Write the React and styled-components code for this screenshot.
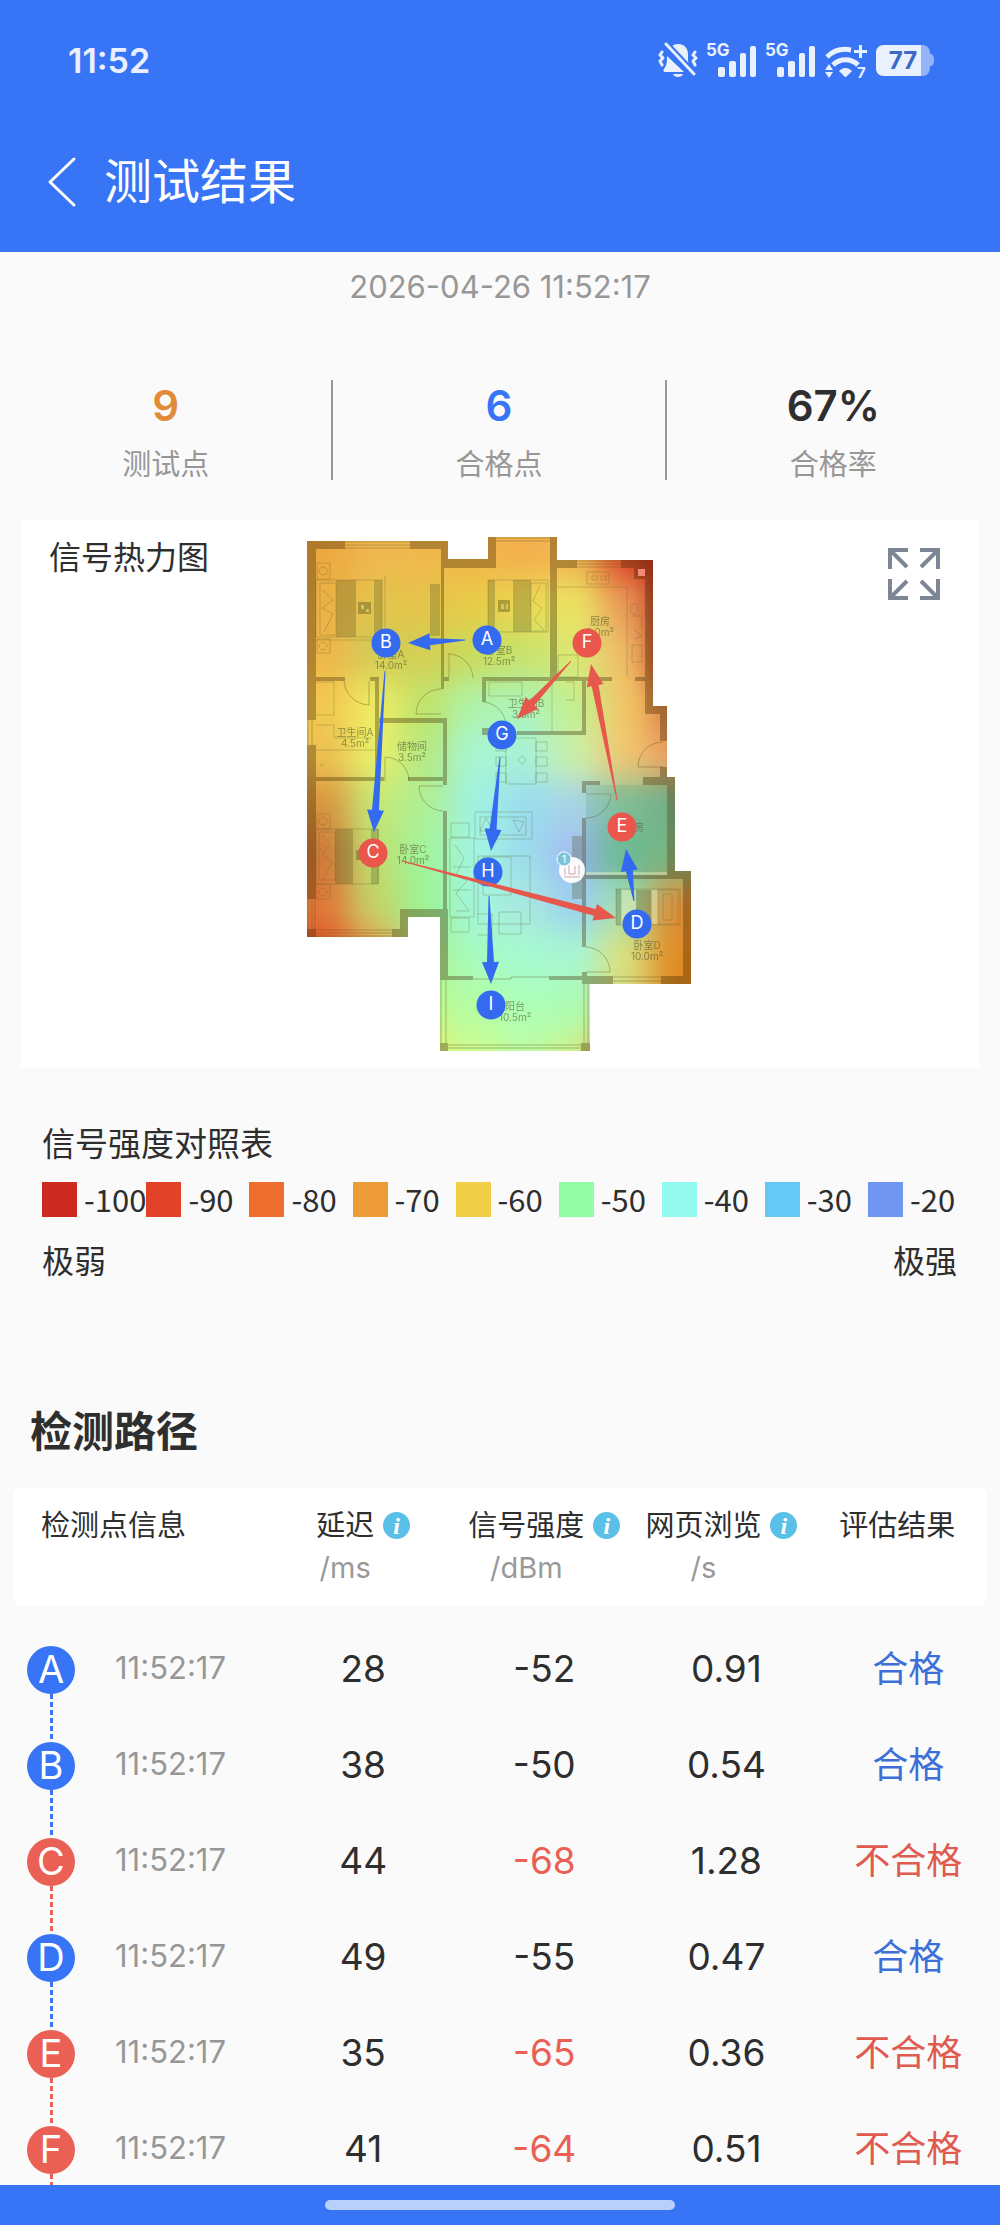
// src/App.jsx

import React from 'react';
import styled, { createGlobalStyle } from 'styled-components';

const BLUE = '#3875f6';
const RED = '#ea6055';

const GlobalStyle = createGlobalStyle`
  * {
    box-sizing: border-box;
  }

  body {
    margin: 0;
    background: #fafafa;
    color: #2e2e2e;
    font-family: Inter, 'Noto Sans CJK SC', sans-serif;
  }

  button {
    padding: 0;
    border: none;
    background: none;
    font: inherit;
    color: inherit;
    cursor: pointer;
  }
`;

const Screen = styled.div`
  display: flex;
  flex-direction: column;
  height: 100vh;
  overflow: hidden;
`;

const Header = styled.header`
  flex: none;
  background: ${BLUE};
  color: #fff;
`;

const StatusBar = styled.div`
  display: flex;
  align-items: center;
  justify-content: space-between;
  height: 120px;
  padding: 0 66px 0 68px;
`;

const Clock = styled.time`
  color: #eaf0ff;
  font-size: 34px;
  font-weight: 600;
`;

const StatusIcons = styled.div`
  display: flex;
  align-items: center;
  gap: 8px;

  svg {
    display: block;
    fill: #e9f0fe;
  }
`;

const NavBar = styled.div`
  display: flex;
  align-items: center;
  gap: 26px;
  height: 132px;
  padding: 0 46px 8px;
`;

const BackButton = styled.button`
  width: 32px;
  height: 52px;

  svg {
    display: block;
  }
`;

const PageTitle = styled.h1`
  margin: 0;
  font-size: 48px;
  font-weight: 400;
  line-height: 60px;
`;

const Content = styled.main`
  flex: 1;
  min-height: 0;
  overflow-y: auto;
  scrollbar-width: none;
`;

const TestTime = styled.p`
  margin: 0;
  padding-top: 15px;
  color: #979797;
  font-size: 31px;
  line-height: 40px;
  text-align: center;
`;

const Stats = styled.dl`
  display: grid;
  grid-template-columns: repeat(3, 1fr);
  margin: 73px 0 40px;
`;

const Stat = styled.div`
  display: flex;
  flex-direction: column-reverse;
  justify-content: flex-end;
  gap: 16px;
  height: 100px;
  text-align: center;

  &:not(:last-child) {
    border-right: 2px solid #989898;
  }
`;

const StatLabel = styled.dt`
  color: #979797;
  font-size: 29px;
  line-height: 34px;
`;

const StatValue = styled.dd`
  margin: 0;
  color: ${({ $color }) => $color};
  font-size: 42px;
  font-weight: 600;
  line-height: 52px;
`;

const HeatCard = styled.section`
  display: grid;
  grid-template-columns: 1fr 400px 1fr;
  align-items: start;
  height: 548px;
  margin: 0 21px;
  padding: 10px 0;
  background: #fff;
`;

const CardTitle = styled.h2`
  margin: 0;
  padding: 6px 0 0 28px;
  font-size: 32px;
  font-weight: 400;
  line-height: 44px;
`;

const ExpandButton = styled.button`
  justify-self: end;
  width: 52px;
  height: 52px;
  margin: 18px 39px 0 0;

  svg {
    display: block;
  }
`;

const Plan = styled.svg`
  display: block;
  width: 400px;
  height: 530px;
`;

const Legend = styled.section`
  margin: 51px 29px 0 42px;
  font-family: 'Noto Sans CJK SC', sans-serif;
`;

const LegendTitle = styled.h2`
  margin: 0;
  font-size: 33px;
  font-weight: 400;
  line-height: 46px;
`;

const Scale = styled.ul`
  display: grid;
  grid-template-columns: repeat(9, 1fr);
  margin: 11px 0 0;
  padding: 0;
  list-style: none;
`;

const ScaleItem = styled.li`
  display: flex;
  align-items: center;
  gap: 7px;
  height: 46px;
  font-size: 31px;
  line-height: 46px;
  white-space: nowrap;

  &::before {
    content: '';
    flex: none;
    width: 35px;
    height: 35px;
    background: ${({ $color }) => $color};
  }
`;

const ScaleEnds = styled.div`
  display: flex;
  justify-content: space-between;
  margin-top: 15px;
  padding-right: 14px;
  font-size: 32px;
  line-height: 44px;
`;

const SectionTitle = styled.h2`
  margin: 122px 30px 0;
  font-size: 42px;
  font-weight: 700;
  line-height: 58px;
`;

const TableWrap = styled.div`
  margin: 27px 13px 0;
`;

const Table = styled.table`
  width: 100%;
  table-layout: fixed;
  border-spacing: 0;

  tbody::before {
    content: '';
    display: block;
    height: 40px;
  }
`;

const Col = styled.col`
  width: ${({ $width }) => $width};
`;

const HeadCell = styled.th`
  height: 118px;
  padding: 17px 0 0;
  background: #fff;
  font-size: 29px;
  font-weight: 400;
  line-height: 42px;
  vertical-align: top;
  white-space: nowrap;

  &:first-child {
    padding-left: 28px;
    border-radius: 8px 0 0 8px;
    text-align: left;
  }

  &:nth-last-child(-n + 2) {
    padding-right: 10px;
  }

  &:last-child {
    border-radius: 0 8px 8px 0;
  }
`;

const HeadLabel = styled.div`
  display: flex;
  justify-content: center;
  gap: 9px;
`;

const Unit = styled.span`
  display: block;
  color: #999;
  font-size: 29px;
  text-align: center;
`;

const InfoButton = styled.button`
  width: 27px;
  height: 27px;
  margin-top: 7px;
  border-radius: 50%;
  background: #5bc0e8;
  color: #fff;
  font-family: 'Liberation Serif', serif;
  font-size: 24px;
  font-style: italic;
  font-weight: 700;
  line-height: 26px;
`;

const Cell = styled.td`
  height: 96px;
  padding: 0;
  color: ${({ $color }) => $color || '#2e2e2e'};
  font-size: 37px;
  line-height: 46px;
  text-align: center;
  vertical-align: top;
  white-space: nowrap;

  &:last-child {
    padding-left: 12px;
    font-size: 36px;
  }
`;

const Point = styled.div`
  display: flex;
  gap: 40px;
  padding-left: 14px;
`;

const Track = styled.div`
  display: flex;
  flex-direction: column;
  align-items: center;

  &::after {
    content: '';
    width: 3px;
    height: 48px;
    background: repeating-linear-gradient(${({ $color }) => $color} 0 5px, transparent 5px 8px);
  }
`;

const Badge = styled.span`
  width: 48px;
  height: 48px;
  border-radius: 50%;
  background: ${({ $color }) => $color};
  color: #fff;
  font-size: 38px;
  line-height: 46px;
`;

const PointTime = styled.time`
  color: #979797;
  font-size: 31px;
  line-height: 44px;
`;

const HomeBar = styled.footer`
  display: flex;
  flex: none;
  align-items: center;
  justify-content: center;
  height: 40px;
  background: ${BLUE};

  &::before {
    content: '';
    width: 35%;
    height: 10px;
    border-radius: 5px;
    background: #b9cffc;
  }
`;

const stats = [
  { label: '测试点', value: '9', color: '#e28a35' },
  { label: '合格点', value: '6', color: BLUE },
  { label: '合格率', value: '67%', color: '#2e2e2e' },
];

const scale = [
  ['-100', '#cc2a20'],
  ['-90', '#e24328'],
  ['-80', '#ed6e2d'],
  ['-70', '#ee9c38'],
  ['-60', '#f0cf47'],
  ['-50', '#92fca6'],
  ['-40', '#94f9ee'],
  ['-30', '#65c9f6'],
  ['-20', '#7196f2'],
];

const rows = [
  { id: 'A', time: '11:52:17', delay: 28, signal: -52, web: '0.91', pass: true },
  { id: 'B', time: '11:52:17', delay: 38, signal: -50, web: '0.54', pass: true },
  { id: 'C', time: '11:52:17', delay: 44, signal: -68, web: '1.28', pass: false },
  { id: 'D', time: '11:52:17', delay: 49, signal: -55, web: '0.47', pass: true },
  { id: 'E', time: '11:52:17', delay: 35, signal: -65, web: '0.36', pass: false },
  { id: 'F', time: '11:52:17', delay: 41, signal: -64, web: '0.51', pass: false },
];

// One colour per 50px square of the plan, blurred together into the heat layer
const heat = [
  'eca840 f0b850 f0b84c f2b64a f3b04e f0b852 dc4428 b01c14',
  'ecb044 e2c44c e4c44a e8cc48 ecd852 ece464 ea9c58 b42018',
  'efb64a d2cc58 d4cf54 c8dc5e c6e26c dce874 f0bc68 bc3018',
  'f2c850 f0ec64 bee46c aef4ac acf4b8 c4f090 f2c866 dc7840',
  'ecc050 e9f06a b4e882 a8f6d4 a8f2d8 caf0a8 f2c670 e89c60',
  'd8943e c4e878 aef094 a0f2e2 9adcee a8d4e8 8cc8a0 7cb890',
  'd07838 bee070 a0f49c a2f6e2 9cdcec a4bcf4 76c49c 88c088',
  'e07838 c4d468 9cf494 a2f6dc a8e8e0 9cd0f0 a0e0b0 dc8c38',
  'e25028 ec9c4c acf290 a6fbc0 a6fad0 a8f6d4 dce07c e08c24',
  'e65028 ec9440 bcf88c b4fea4 acffb8 acfcb4 d4dc80 e08424',
  'e65028 ec9440 e0f078 ccfc90 bcfca4 ccf48c e09838 e08424',
].map((line) => line.split(' '));

const outline =
  'M307 541H448V559H488V537H557V560H653V706H667V777H675V871H691V984H590V1051H440V917H408V937H307Z';

const walls = [
  'M307 541h38v8h-29v171h-9z',
  'M410 541h38v18h40v-22h8v31h-52v121h-3V549h-31z',
  'M307 745h9v154h-9zM307 929h9v8h-9zM392 929h8v-20h40v8h-32v20h-16z',
  'M550 537h7v23h20v8h-20v109h29v58h-69v-4h65v-50h-96v21h-4v-25h68z',
  'M586 677h26v4h-26zM635 677h10v4h-10zM482 728h8v7h-8z',
  'M621 560h32v146h14v35h-7v-27h-15V579h-11v-11h-13z',
  'M316 677h29v4h-29zM370 677h9v41h68v67h-4v-4h-35v-4h35v-54h-64v54h5v4h-68v-4h59v-96h-5zM444 677h5v4h-5z',
  'M443 811h4v98h1v67h25v4h-33v-71h3zM440 1043h8v8h-8zM581 1043h9v8h-9z',
  'M643 777h32v94h16v113h-30v-8h22v-97H586v68h-4V818h4v57h81v-90h-24zM660 767h7v10h-7zM582 781h18v4h-14v8h-4z',
  'M549 976h33v-4h5v4h26v8h-31v-4h-33z',
];

const thinLines = [
  'M345 542h65M345 545h65M345 548h65M496 538h54M496 541h54M577 561h44M577 564h44M577 567h44',
  'M308 720v25M312 720v25M308 899v30M312 899v30M315 899v30M316 930h76M316 933h76M316 936h76',
  'M441 980v63M446 980v63M448 1045h133M448 1048h133M584 984v59M588 984v59M613 977h48M613 981h48',
  'M473 979h38v-2h38M344 681a26 26 0 0 0 25 24v-24M449 653v24M449 654a25 25 0 0 1 24 24M441 689a25 25 0 0 0-25 25h25M385 781v-24a24 24 0 0 1 24 23M443 786h-24a25 25 0 0 0 24 25',
  'M484 702a25 25 0 0 1 22 28M586 818a25 25 0 0 0 25-24M586 947a25 25 0 0 1 24 25h-24M663 742a25 25 0 0 0-25 25h25',
];

// Beds, sofas, tables and kitchen fittings, as outlines
const furniture = [
  'M316 580h66v57h-66zM320 583h16v52h-16zM385 576v64h-69',
  'M317 563h13v16h-13zM317 639h13v14h-13zM317 814h13v15h-13zM317 884h13v15h-13z',
  'M323 567a4 4 0 1 0 .1 0M323 642a4 4 0 1 0 .1 0M323 817a4 4 0 1 0 .1 0M323 888a4 4 0 1 0 .1 0',
  'M322 590l11 10-11 8 11 6-9 18M322 835l9 9-9 10 10 8-9 18',
  'M316 829h62v55h-62zM319 832h16v48h-16z',
  'M488 580h60v52h-60zM531 583h15v48h-15zM540 585l-7 16 9 7-8 12 10 10',
  'M558 587h69v90M587 572h22v12h-22zM592 576h5v4h-5zM601 576h5v4h-5zM632 645h10v17h-10zM632 616h10v14',
  'M558 655h20v22h-20zM641 555h4v21M634 604a4 5 0 1 0 .1 0M634 630l8 6-8 3',
  'M316 682h18v33h-18M316 725h18v13h38M316 750h59M320 765h4M489 682h33v14h-33zM552 682v50M566 682h8v18h-8',
  'M506 738h30v46h-30zM496 742h10v9h-10zM496 757h10v9h-10zM496 773h10v9h-10zM536 742h11v9h-11zM536 757h11v9h-11zM536 773h11v9h-11z',
  'M475 812h57v27h-57zM480 817h46v18h-46zM450 838h24v79h-24zM455 845l9 13-8 17 11 6-11 12 13 18h-13M453 867h18M453 890h18M451 823h18v14h-18z',
  'M451 918h18v14h-18zM478 856h52v68h-52zM483 857h28v38h-28zM499 912h22v22h-22zM477 914h15v21h-15',
  'M616 889h64v36h-64zM658 890h20v34h-20zM663 894h9v26h-9zM586 794h24M318 850l4-2',
  'M486 818l-6 13h13zM513 820l6 12 5-10zM522 756l4 4-4 4-4-4z',
];

const roomLabels = [
  [391, 658, '卧室A', '14.0m²'],
  [499, 654, '卧室B', '12.5m²'],
  [600, 625, '厨房', '5.0m²'],
  [355, 736, '卫生间A', '4.5m²'],
  [412, 750, '储物间', '3.5m²'],
  [526, 707, '卫生间B', '3.6m²'],
  [413, 853, '卧室C', '14.0m²'],
  [647, 949, '卧室D', '10.0m²'],
  [515, 1010, '阳台', '10.5m²'],
  [634, 831, '书房', ''],
];

const markers = [
  { id: 'A', x: 487, y: 640, color: '#346af0' },
  { id: 'B', x: 386, y: 643, color: '#346af0' },
  { id: 'C', x: 373, y: 853, color: '#ea554c' },
  { id: 'D', x: 637, y: 924, color: '#346af0' },
  { id: 'E', x: 622, y: 827, color: '#ea554c' },
  { id: 'F', x: 587, y: 643, color: '#ea554c' },
  { id: 'G', x: 502, y: 735, color: '#346af0' },
  { id: 'H', x: 488, y: 872, color: '#346af0' },
  { id: 'I', x: 491, y: 1005, color: '#346af0' },
];

const arrows = [
  [465, 640, 408, 643, '#346af0'],
  [385, 671, 374, 832, '#346af0'],
  [402, 861, 616, 918, '#e6584c'],
  [634, 901, 626, 849, '#346af0'],
  [617, 800, 591, 664, '#e6584c'],
  [571, 661, 517, 719, '#e6584c'],
  [500, 757, 491, 851, '#346af0'],
  [489, 896, 491, 984, '#346af0'],
];

const Arrow = ({ points: [x1, y1, x2, y2, color] }) => {
  const length = Math.hypot(x2 - x1, y2 - y1);
  const angle = (Math.atan2(y2 - y1, x2 - x1) * 180) / Math.PI;
  const neck = length - 22;

  return (
    <path
      d={`M0 -.5L${neck} -3.5V-8.5L${length} 0L${neck} 8.5V3.5L0 .5Z`}
      fill={color}
      transform={`translate(${x1} ${y1}) rotate(${angle})`}
    />
  );
};

const FloorPlan = () => (
  <Plan viewBox="300 530 400 530" role="img" aria-label="信号热力图">
    <defs>
      <clipPath id="plan-outline">
        <path d={outline} />
      </clipPath>
      <filter id="heat-blur" x="-10%" y="-10%" width="120%" height="120%" colorInterpolationFilters="sRGB">
        <feGaussianBlur stdDeviation="16" />
      </filter>
    </defs>

    <g clipPath="url(#plan-outline)">
      <g filter="url(#heat-blur)">
        {heat.map((line, row) =>
          line.map((color, col) => (
            <rect
              key={`${row}-${col}`}
              x={col === 0 ? 240 : 300 + col * 50}
              y={row === 0 ? 470 : 530 + row * 50}
              width={col === 0 || col === 7 ? 111 : 51}
              height={row === 0 || row === 10 ? 111 : 51}
              fill={`#${color}`}
            />
          ))
        )}
      </g>
      <path d="M586 785h81v90h-81z" fill="#1c7350" opacity=".12" />
      <path
        d="M336 580h20v57h-20zM374 580h8v57h-8zM335 829h18v55h-18zM371 829h8v55h-8zM430 584h10v52h-10zM488 580h7v52h-7zM513 580h18v52h-18zM572 836h10v63h-10zM636 890h15v34h-15zM616 889h5v36h-5z"
        fill="#50511c"
        opacity=".28"
      />
      <path d="M358 602h13v12h-13zM498 600h12v12h-12zM356 850h10v10h-10z" fill="#50511c" opacity=".4" />
      <path d="M361 605h3v4h-3zM366 609h3v3h-3zM501 604h3v5h-3zM506 604h2v5h-2z" fill="#e3d868" opacity=".7" />
      <path d="M622 890h14v34h-14zM652 890h6v34h-6zM586 872h81v3h-81z" fill="#f7f5c5" opacity=".4" />
      <path d={furniture.join('')} fill="none" stroke="#62632e" strokeWidth="1" opacity=".3" />
      <path d={thinLines.join('')} fill="none" stroke="#665a24" strokeWidth="1" opacity=".4" />
      <path d={walls.join('')} fill="#3a2200" opacity=".34" />
      <path d="M638 569h7v7h-7z" fill="#f3897b" />
    </g>

    <g fill="#53592f" opacity=".6" fontSize="10" textAnchor="middle">
      {roomLabels.map(([x, y, name, area]) => (
        <text key={name} x={x} y={y}>
          {name}
          <tspan x={x} dy="11">
            {area}
          </tspan>
        </text>
      ))}
    </g>

    <circle cx="572" cy="870" r="13" fill="#fff" opacity=".95" />
    <path
      d="M565 868v7M579 865v10M564 877h16M569 865v9h6v-8"
      fill="none"
      stroke="#d9a6a6"
      strokeWidth="1"
    />
    <circle cx="564" cy="859" r="7" fill="#7cc3da" stroke="#fff" strokeWidth="1" />
    <text x="564" y="863" fill="#fff" fontSize="11" textAnchor="middle">
      1
    </text>

    {markers.map(({ id, x, y, color }) => (
      <circle key={id} cx={x} cy={y} r="14.5" fill={color} />
    ))}
    {arrows.map((points) => (
      <Arrow key={points.join()} points={points} />
    ))}
    <g fill="#fff" fontSize="18" textAnchor="middle">
      {markers.map(({ id, x, y }) => (
        <text key={id} x={x} y={y + 5}>
          {id}
        </text>
      ))}
    </g>
  </Plan>
);

const MuteIcon = () => (
  <svg width="40" height="36" viewBox="0 0 40 36">
    <path d="M13 5C15 3 17 2 20 2c6 0 10 4 10 10v6c0 3 1 5 3 8zM9 14l17 16H7c-2 0-2-2-1-3 2-3 3-6 3-10zM15 32h10c-1 4-9 4-10 0z" />
    <path d="M8 2l28 30" fill="none" stroke={BLUE} strokeWidth="7" />
    <path d="M8 2l28 30" fill="none" stroke="#e9f0fe" strokeWidth="3" strokeLinecap="round" />
    <path
      d="M4 10l-2 3 3 3-3 3 2 4M37 10l-2 3 3 3-3 3 2 4"
      fill="none"
      stroke="#e9f0fe"
      strokeWidth="3"
      strokeLinecap="round"
      strokeLinejoin="round"
    />
  </svg>
);

const SignalIcon = () => (
  <svg width="51" height="48" viewBox="1 -6 51 48">
    <text x="1" y="14" fontSize="17" fontWeight="700">
      5G
    </text>
    <rect x="13" y="25" width="7" height="10" rx="2" />
    <rect x="24" y="19" width="7" height="16" rx="2" />
    <rect x="35" y="11" width="6" height="24" rx="2" />
    <rect x="45" y="4" width="6" height="31" rx="2" />
  </svg>
);

const WifiIcon = () => (
  <svg width="44" height="48" viewBox="0 -6 44 48">
    <g fill="none" stroke="#e9f0fe" strokeWidth="5">
      <path d="M3 15C9 9 17 6 27 8" />
      <path d="M9 23c7-7 18-7 25 0" />
    </g>
    <path d="M15 29c4-4 9-4 13 0l-6 6h-1zM1 28l4-6 4 6zM1 30h8l-4 6zM35 3h3v5h5v3h-5v5h-3v-5h-5V8h5z" />
    <text x="33" y="36" fontSize="15" fontWeight="700">
      7
    </text>
  </svg>
);

const BatteryIcon = () => (
  <svg width="58" height="31" viewBox="0 0 58 31">
    <path d="M44 0h2c6 0 8 4 8 9 3 0 4 2 4 6s-1 6-4 6c0 6-2 10-8 10h-2z" fill="#94b4fa" />
    <path d="M8 0h37v31H8c-5 0-8-3-8-8V8c0-5 3-8 8-8z" />
    <text x="27" y="24" fill="#3c68c8" fontSize="24" fontWeight="700" textAnchor="middle">
      77
    </text>
  </svg>
);

const App = () => {
  return (
    <Screen>
      <GlobalStyle />
      <Header>
        <StatusBar>
          <Clock>11:52</Clock>
          <StatusIcons>
            <MuteIcon />
            <SignalIcon />
            <SignalIcon />
            <WifiIcon />
            <BatteryIcon />
          </StatusIcons>
        </StatusBar>
        <NavBar>
          <BackButton aria-label="返回">
            <svg width="32" height="52" viewBox="0 0 32 52" fill="none" stroke="#fff" strokeWidth="3">
              <path d="M28 3L4 26l24 23" strokeLinecap="round" strokeLinejoin="round" />
            </svg>
          </BackButton>
          <PageTitle>测试结果</PageTitle>
        </NavBar>
      </Header>

      <Content>
        <TestTime>2026-04-26 11:52:17</TestTime>

        <Stats>
          {stats.map(({ label, value, color }) => (
            <Stat key={label}>
              <StatLabel>{label}</StatLabel>
              <StatValue $color={color}>{value}</StatValue>
            </Stat>
          ))}
        </Stats>

        <HeatCard>
          <CardTitle>信号热力图</CardTitle>
          <FloorPlan />
          <ExpandButton aria-label="全屏">
            <svg width="52" height="52" viewBox="0 0 52 52" fill="none" stroke="#7d8695" strokeWidth="4">
              <path d="M20 2H2v19M2 2l17 17M32 2h18v19M50 2L33 19M20 50H2V31M2 50l17-17M32 50h18V31M50 50L33 33" />
            </svg>
          </ExpandButton>
        </HeatCard>

        <Legend>
          <LegendTitle>信号强度对照表</LegendTitle>
          <Scale>
            {scale.map(([value, color]) => (
              <ScaleItem key={value} $color={color}>
                {value}
              </ScaleItem>
            ))}
          </Scale>
          <ScaleEnds>
            <span>极弱</span>
            <span>极强</span>
          </ScaleEnds>
        </Legend>

        <SectionTitle>检测路径</SectionTitle>
        <TableWrap>
          <Table>
            <colgroup>
              <Col $width="26.7%" />
              <Col $width="18.5%" />
              <Col $width="18.7%" />
              <Col $width="18.7%" />
              <Col $width="17.4%" />
            </colgroup>
            <thead>
              <tr>
                <HeadCell>检测点信息</HeadCell>
                {[
                  ['延迟', '/ms'],
                  ['信号强度', '/dBm'],
                  ['网页浏览', '/s'],
                ].map(([label, unit]) => (
                  <HeadCell key={label}>
                    <HeadLabel>
                      <div>
                        {label}
                        <Unit>{unit}</Unit>
                      </div>
                      <InfoButton aria-label={`${label}说明`}>i</InfoButton>
                    </HeadLabel>
                  </HeadCell>
                ))}
                <HeadCell>评估结果</HeadCell>
              </tr>
            </thead>
            <tbody>
              {rows.map(({ id, time, delay, signal, web, pass }) => {
                const color = pass ? BLUE : RED;

                return (
                  <tr key={id}>
                    <Cell>
                      <Point>
                        <Track $color={color}>
                          <Badge $color={color}>{id}</Badge>
                        </Track>
                        <PointTime>{time}</PointTime>
                      </Point>
                    </Cell>
                    <Cell>{delay}</Cell>
                    <Cell $color={pass ? undefined : RED}>{signal}</Cell>
                    <Cell>{web}</Cell>
                    <Cell $color={pass ? '#3c70d8' : '#e05a50'}>{pass ? '合格' : '不合格'}</Cell>
                  </tr>
                );
              })}
            </tbody>
          </Table>
        </TableWrap>
      </Content>

      <HomeBar />
    </Screen>
  );
};

export default App;
